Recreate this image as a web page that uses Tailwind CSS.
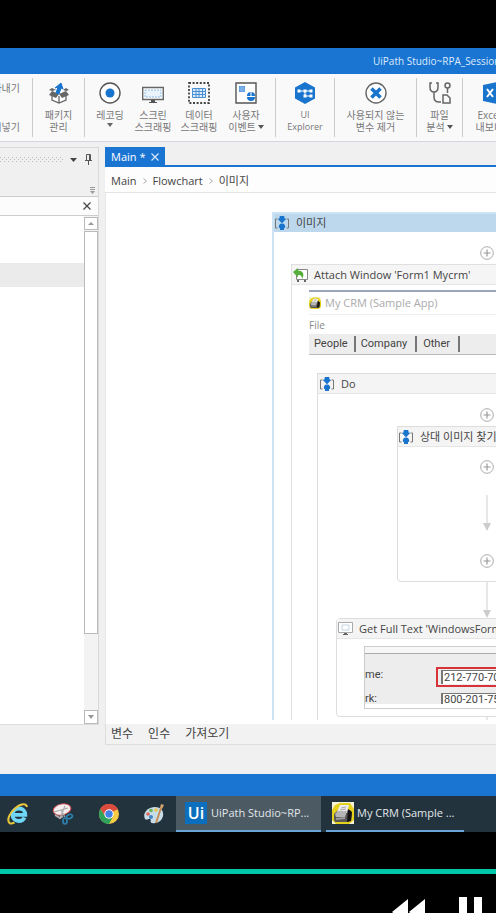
<!DOCTYPE html>
<html lang="ko">
<head>
<meta charset="utf-8">
<title>UiPath Studio</title>
<script src="https://cdn.jsdelivr.net/npm/@tailwindcss/browser@4"></script>
</head>
<body class="flex h-screen flex-col overflow-hidden bg-black font-['Open_Sans','Noto_Sans_CJK_KR',sans-serif] text-[11px] leading-4 text-[#444]">
<svg class="hidden" aria-hidden="true">
  <symbol id="seq" viewBox="0 0 16 16"><path d="M3.500 4H1.500v9h2M12.500 4h2v9h-2" fill="none" stroke="#777"/><path d="M6 1.500h4V4h1.500L8 7.800 4.500 4H6z" fill="#1874cd" stroke="#1874cd" stroke-linejoin="round"/><path d="M8 8.500a3 3 0 0 1 2.800 4.500H10v2H6v-2h-.8A3 3 0 0 1 8 8.500z" fill="#1874cd"/></symbol>
  <symbol id="plus" viewBox="0 0 14 14"><circle cx="7" cy="7" r="6.300" fill="#fff" stroke="#aaa"/><path d="M7 3.500v7M3.500 7h7" stroke="#999" stroke-width="1.200"/></symbol>
  <symbol id="crm" viewBox="0 0 22 22"><path d="M0 0h22v22H0z" fill="#f6f3d8"/><path d="M3 3 8 1h10l4 6v11l-5 4H4l-4-4V8z" fill="#e5d21d"/><path d="m2 12 4-4h12l2 3-1 8-4 1H3l-1-2z" fill="#5a5856"/><path d="M5 10 8 3h9l-2 8z" fill="#ececec"/><path d="m3 12 3-3h9l-2 6H4z" fill="#b5b5b5"/><path d="m4 17 9-1" stroke="#999" stroke-width="2"/><path d="m16 7 4 3-1 9-4 1z" fill="#151313"/><path d="m9 6 5-1M8 8l6-1" stroke="#aaa"/></symbol>
</svg>

<div class="h-12 shrink-0"></div>
<header class="flex h-[26px] shrink-0 items-center overflow-hidden bg-[#1a74d2] pl-[373px]">
  <h1 class="whitespace-nowrap text-[10px] text-[#dcebfa]">UiPath Studio~RPA_Session</h1>
</header>

<nav aria-label="리본" class="flex h-[68px] shrink-0 overflow-hidden whitespace-nowrap border-b border-[#d3d7e2] bg-[#f9f9fa] text-[10px] leading-3 text-[#777]">
  <div class="flex w-8 shrink-0 flex-col items-end justify-between py-2 pr-3">
    <button>잘라내기</button>
    <button class="mr-5 size-2 rounded-full bg-[#4c93da]" aria-label="복사"></button>
    <button>붙여넣기</button>
  </div>
  <span class="my-1 w-px shrink-0 bg-[#ccc]"></span>
  <button class="flex w-[51px] shrink-0 flex-col items-center gap-[5px] pt-2">
    <svg class="size-[22px]" viewBox="0 0 22 22"><path d="M4 12v6l7 3 7-3v-6M11 14v7" fill="#fff" stroke="#666" stroke-width="1.300"/><path d="m4 9 7 3-3 4-7-3zM18 9l-7 3 3 4 7-3z" fill="#666"/><path d="m4 9-3-1 3-2 4 2zM18 9l3-1-3-2-3 2z" fill="#666"/><path d="m8 11 2-6-3 1 6-5 2 6-2-1-2 6z" fill="#1874cd" stroke="#1874cd"/></svg>
    <span>패키지<br>관리</span>
  </button>
  <span class="my-1 w-px shrink-0 bg-[#ccc]"></span>
  <div class="flex shrink-0 pl-1 pr-[6px]">
    <button class="flex w-[42px] flex-col items-center gap-[5px] pt-2">
      <svg class="size-[22px]" viewBox="0 0 22 22"><circle cx="11" cy="11" r="10" fill="#fff" stroke="#555" stroke-width="1.400"/><circle cx="11" cy="11" r="4.500" fill="#1874cd"/></svg>
      <span class="flex flex-col items-center">레코딩<svg class="mt-0.5 h-1 w-1.5" viewBox="0 0 6 4"><path d="M0 0h6L3 4z" fill="#666"/></svg></span>
    </button>
    <button class="flex w-[44px] flex-col items-center gap-[5px] pt-2">
      <svg class="size-[22px]" viewBox="0 0 22 22"><path d="M.7 5.500h20.600v12H.7z" fill="#fff" stroke="#666" stroke-width="1.400"/><path d="M3 8h16v7H3z" fill="#eaf4ff" stroke="#8dbbe6" stroke-dasharray="2 1"/><path d="M9 18h4v2h2v1H7v-1h2z" fill="#555"/></svg>
      <span>스크린<br>스크래핑</span>
    </button>
    <button class="flex w-[48px] flex-col items-center gap-[5px] pt-2">
      <svg class="size-[22px]" viewBox="0 0 22 22"><path d="M1 1h20v20H1z" fill="none" stroke="#444" stroke-width="1.800" stroke-dasharray="2 1.600"/><path d="M4.500 6.500h13v9h-13z" fill="#d9eafb"/><path d="M4.500 6.500h13v9h-13zM4.500 9.500h13M4.500 12.500h13M8 6.500v9M11 6.500v9M14.500 6.500v9" fill="none" stroke="#4b8fd3"/></svg>
      <span>데이터<br>스크래핑</span>
    </button>
    <button class="flex w-[46px] flex-col items-center gap-[5px] pt-2">
      <svg class="size-[22px]" viewBox="0 0 22 22"><path d="M1 1h20v20H1z" fill="#fff" stroke="#555" stroke-width="1.400"/><path d="M4 4h6v6H4z" fill="#4b94dc"/><path d="M6 4v6M8 4v6M4 6h6M4 8h6" stroke="#b8d7f5" stroke-width=".5"/><rect x="12" y="10" width="8" height="9" rx="4" fill="#1874cd"/><path d="M16 10v4M12 14.500h8" stroke="#fff"/></svg>
      <span>사용자<br>이벤트<svg class="mb-0.5 ml-0.5 inline h-1 w-1.5" viewBox="0 0 6 4"><path d="M0 0h6L3 4z" fill="#555"/></svg></span>
    </button>
  </div>
  <span class="my-1 w-px shrink-0 bg-[#ccc]"></span>
  <button class="flex w-[58px] shrink-0 flex-col items-center gap-[5px] pt-2">
    <svg class="size-[22px]" viewBox="0 0 22 22"><path d="m11 0 10 5.500v11L11 22 1 16.500v-11z" fill="#1874cd"/><path d="M5 9h12M11 9v5h6" fill="none" stroke="#fff"/><path d="M3.500 7.500h3v3h-3zM9.500 7.500h3v3h-3zM15.500 7.500h3v3h-3zM9.500 12.500h3v3h-3zM15.500 12.500h3v3h-3z" fill="#fff"/></svg>
    <span class="text-[9px]">UI<br>Explorer</span>
  </button>
  <span class="my-1 w-px shrink-0 bg-[#ccc]"></span>
  <button class="flex w-[81px] shrink-0 flex-col items-center gap-[5px] pt-2">
    <svg class="size-[22px]" viewBox="0 0 22 22"><circle cx="11" cy="11" r="10" fill="#fff" stroke="#666" stroke-width="1.400"/><path d="m6.500 6.500 9 9M15.500 6.500l-9 9" stroke="#1874cd" stroke-width="3.600"/></svg>
    <span>사용되지 않는<br>변수 제거</span>
  </button>
  <span class="my-1 w-px shrink-0 bg-[#ccc]"></span>
  <button class="flex w-[45px] shrink-0 flex-col items-center gap-[5px] pt-2">
    <svg class="size-[22px]" viewBox="0 0 22 22" fill="none" stroke="#666" stroke-width="1.500"><path d="M3 1H1v4c0 4 2 5 4 5s4-1 4-5V1H7M5 10v5c0 3 2 5 5 5h2"/><circle cx="18.500" cy="3.500" r="2.500"/><path d="M18.500 6v5M14 13h4l3 3v5h-7z"/></svg>
    <span>파일<br>분석<svg class="mb-0.5 ml-0.5 inline h-1 w-1.5" viewBox="0 0 6 4"><path d="M0 0h6L3 4z" fill="#555"/></svg></span>
  </button>
  <span class="my-1 w-px shrink-0 bg-[#ccc]"></span>
  <button class="flex w-[62px] shrink-0 flex-col items-center gap-[5px] pt-2">
    <svg class="size-[22px]" viewBox="0 0 22 22"><path d="m0 3 14-3v22L0 19z" fill="#1874cd"/><path d="M14 3h8v16h-8" fill="#fff" stroke="#1874cd"/><path d="m4 7 6 8M10 7l-6 8" stroke="#fff" stroke-width="2"/></svg>
    <span>Excel로<br>내보내기</span>
  </button>
</nav>

<main class="flex min-h-0 flex-1 bg-[#f0f0f0] pb-[29px] pt-[5px]">
  <aside class="mb-5 flex w-[99px] shrink-0 flex-col border-r border-t border-[#d8d8d8]">
    <div class="flex h-[23px] items-center pr-1.5">
      <svg class="h-1.5 min-w-0 flex-1" preserveAspectRatio="none"><defs><pattern id="grip" width="4" height="4" patternUnits="userSpaceOnUse"><path d="M0 0h1v1H0zM2 2h1v1H2z" fill="#bbb"/></pattern></defs><rect width="63" height="6" fill="url(#grip)"/></svg>
      <button aria-label="창 메뉴" class="mr-2"><svg class="h-1 w-[7px]" viewBox="0 0 7 4"><path d="M0 0h7L3.500 4z" fill="#444"/></svg></button>
      <button aria-label="고정"><svg class="h-[11px] w-[7px]" viewBox="0 0 7 11"><path d="M1.500 6.500v-6h4v6M0 6.500h7M3.500 7v4M4.500 1v5" fill="none" stroke="#555"/></svg></button>
    </div>
    <div class="flex h-[25px] items-end justify-end pb-0.5 pr-[3px]">
      <button aria-label="더 보기"><svg class="h-[7px] w-[5px]" viewBox="0 0 5 7"><path d="M0 .5h5M0 2.500h5" stroke="#999"/><path d="M0 4h5L2.500 7z" fill="#999"/></svg></button>
    </div>
    <div class="flex h-5 shrink-0 items-center justify-end border-y border-[#ccc] bg-[#fcfcfc] pr-[7px]">
      <button aria-label="지우기"><svg class="size-2" viewBox="0 0 8 8"><path d="m.5.5 7 7m0-7-7 7" stroke="#444" stroke-width="1.200"/></svg></button>
    </div>
    <div class="flex min-h-0 flex-1 border-b border-[#ddd] bg-white">
      <div class="flex-1 pt-[47px]"><div class="h-6 bg-[#ebebeb]"></div></div>
      <div class="flex w-[14px] flex-col bg-[#f3f3f3]">
        <button aria-label="위로" class="mb-px mt-px flex h-[13px] items-center justify-center border border-[#bbb] bg-white"><svg class="h-[3px] w-1.5" viewBox="0 0 6 3"><path d="M0 3h6L3 0z" fill="#999"/></svg></button>
        <div class="h-[403px] border border-[#bbb] bg-white"></div>
        <button aria-label="아래로" class="mt-auto flex h-[14px] items-center justify-center border border-[#bbb] bg-white"><svg class="h-1 w-1.5" viewBox="0 0 6 4"><path d="M0 0h6L3 4z" fill="#999"/></svg></button>
      </div>
    </div>
  </aside>

  <section class="ml-[6px] flex min-w-0 flex-1 flex-col">
    <div class="flex h-5 shrink-0 border-b-2 border-[#1a74d2]">
      <button class="flex w-[60px] items-center gap-[6px] bg-[#1a74d2] pl-[6px] pt-0.5 text-white">Main *<svg class="size-2" viewBox="0 0 8 8"><path d="m.5.5 7 7m0-7-7 7" stroke="#d6e8fa" stroke-width="1.200"/></svg></button>
    </div>
    <nav aria-label="경로" class="flex h-[26px] shrink-0 items-center gap-[6px] border-b border-[#e4e4e4] bg-[#fdfdfd] pl-[6px] pt-0.5">
      <a href="#">Main</a>
      <svg class="h-1.5 w-1" viewBox="0 0 4 6"><path d="m.5.500 3 2.500-3 2.500" fill="none" stroke="#aaa"/></svg>
      <a href="#">Flowchart</a>
      <svg class="h-1.5 w-1" viewBox="0 0 4 6"><path d="m.5.500 3 2.500-3 2.500" fill="none" stroke="#aaa"/></svg>
      <a href="#">이미지</a>
    </nav>
    <div class="min-h-0 flex-1 overflow-hidden border-l border-[#e8e8e8] bg-white pb-1">
      <div class="h-full overflow-hidden pl-[166px] pt-[19px]">
        <div class="flex w-[430px] flex-col items-center border-2 border-[#cbe3f2]">
          <h2 class="flex h-[18px] w-full items-center gap-[6px] bg-[#bdd8ec]"><svg class="size-4"><use href="#seq"/></svg>이미지</h2>
          <button aria-label="추가" class="mb-1 mt-[14px]"><svg class="size-[14px]"><use href="#plus"/></svg></button>

          <div class="flex w-[392px] flex-col items-center border border-[#e0e0e0]">
            <h3 class="flex h-5 w-full items-center gap-[6px] border-b border-[#e5e5e5] bg-[#f5f5f5] pl-px"><svg class="size-[15px]" viewBox="0 0 15 15"><path d="M3.500 2.500h11v10h-11z" fill="#fff" stroke="#888"/><path d="M5 13v2M12 13v2" stroke="#666" stroke-width="2"/><path d="m0 5 5-4v2.500c5 0 7 4 4 8.500 0-3-1-4-4-4v2.500z" fill="#55ad3c"/></svg>Attach Window 'Form1 Mycrm'</h3>
            <div class="mt-[5px] w-full pl-[17px] pr-4">
              <div class="border-t-2 border-[#9aa5bc]">
                <p class="flex h-[22px] items-center gap-[4px] text-[#aaa]"><svg class="size-3"><use href="#crm"/></svg>My CRM (Sample App)</p>
                <p class="flex h-[20px] items-center border-t border-[#eee] text-[10px] text-[#888]">File</p>
                <div class="flex h-[21px] items-center border-b border-[#bbb] bg-[#ededed] pl-[5px] font-[Roboto,sans-serif] text-[11px] text-[#444]">
                  <button class="border-r-2 border-[#777] pr-[6px]">People</button><button class="border-r-2 border-[#777] pl-[5px] pr-2">Company</button><button class="border-r-2 border-[#777] pl-[6px] pr-2">Other</button>
                </div>
              </div>
            </div>

            <div class="mt-[18px] flex w-[340px] flex-col items-center border border-[#ddd]">
              <h4 class="flex h-5 w-full items-center gap-[6px] border-b border-[#e5e5e5] bg-[#f4f4f4] pl-px"><svg class="size-4"><use href="#seq"/></svg>Do</h4>
              <button aria-label="추가" class="mb-1 mt-[14px]"><svg class="size-[14px]"><use href="#plus"/></svg></button>
              <div class="flex w-[180px] flex-col items-center rounded-b border border-[#ddd]">
                <h5 class="flex h-5 w-full items-center gap-[6px] border-b border-[#e5e5e5] bg-[#f4f4f4]"><svg class="size-4"><use href="#seq"/></svg>상대 이미지 찾기</h5>
                <button aria-label="추가" class="mt-[13px]"><svg class="size-[14px]"><use href="#plus"/></svg></button>
                <svg class="mt-[21px] h-9 w-2" viewBox="0 0 8 36"><path d="M4 0v28" stroke="#d0d0d0"/><path d="M0 28h8l-4 8z" fill="#ccc"/></svg>
                <button aria-label="추가" class="mb-[13px] mt-[23px]"><svg class="size-[14px]"><use href="#plus"/></svg></button>
              </div>
              <svg class="h-9 w-2 shrink-0" viewBox="0 0 8 36"><path d="M4 0v28" stroke="#d0d0d0"/><path d="M0 28h8l-4 8z" fill="#ccc"/></svg>
              <div class="w-[302px] rounded-sm border border-[#ddd]">
                <h5 class="flex h-5 w-full items-center gap-[6px] border-b border-[#e5e5e5] bg-[#f4f4f4] pl-px"><svg class="size-[15px]" viewBox="0 0 15 15"><path d="M.5 1.500h14v10H.5z" fill="#fff" stroke="#aaa"/><path d="M4 4h7v5H4z" fill="none" stroke="#c2d3e2"/><path d="M6 12h3v1h1v1H5v-1h1z" fill="#666"/></svg>Get Full Text 'WindowsForms'</h5>
                <div class="mx-[27px] my-[7px] border border-[#ccc] pb-1 font-[Roboto,sans-serif] text-[11px]">
                  <div class="h-[57px] overflow-hidden bg-[#ededed]">
                    <div class="h-[7px] border-b border-[#aaa] bg-[#f7f7f7]"></div>
                    <div class="mt-[13px] flex h-5 items-start"><span class="w-[71px]">me:</span><span class="flex h-5 flex-1 items-center border-2 border-[#d73338] pl-[3px]"><span class="flex h-[14px] flex-1 items-center border-l-2 border-t border-[#777] bg-white pl-px">212-770-7000</span></span></div>
                    <div class="mt-[6px] flex h-4 items-start"><span class="w-[76px] leading-[12px]">rk:</span><span class="flex-1 border-l-2 border-t border-[#777] bg-white pl-px leading-[12px]">800-201-7500</span></div>
                  </div>
                </div>
              </div>
              <svg class="h-9 w-2 shrink-0" viewBox="0 0 8 36"><path d="M4 0v28" stroke="#d0d0d0"/><path d="M0 28h8l-4 8z" fill="#ccc"/></svg>
            </div>
          </div>
        </div>
      </div>
    </div>
    <div class="flex h-[21px] shrink-0 items-center gap-[15px] border-b border-l border-[#ddd] bg-[#f2f2f2] pl-[5px] text-[12px]">
      <button>변수</button><button>인수</button><button>가져오기</button>
    </div>
  </section>
</main>

<div class="h-[22px] shrink-0 bg-[#1a74d2]"></div>
<nav aria-label="작업 표시줄" class="flex h-9 shrink-0 overflow-hidden whitespace-nowrap bg-[#22333e] text-[#e2e7ea]">
  <button aria-label="Internet Explorer" class="flex w-10 items-center justify-center pr-[5px]"><svg class="size-[22px]" viewBox="0 0 22 22"><path d="M17.500 14.500c-1 2.500-3 3.500-5.500 3.500-4 0-6.500-3-6.500-6.300S8 5.500 12 5.500s6.300 2.500 6.300 6.300H7" fill="none" stroke="#6fd6f6" stroke-width="3.800"/><path d="M2.500 20c-3-3 0-10 6-15s11-4.500 11.500-1M2.500 20c1 1 3 .500 5-.500" fill="none" stroke="#e8c63b" stroke-width="2"/></svg></button>
  <button aria-label="캡처 도구" class="flex w-[46px] items-center justify-center"><svg class="size-[22px]" viewBox="0 0 22 22"><ellipse cx="10" cy="6.500" rx="9" ry="5.500" fill="#f5eeee" stroke="#c8454b" transform="rotate(-12 10 6.500)"/><path d="m9 7 4 7M13 3 8 15M2 9l14-4" stroke="#aaa" stroke-width="1.200"/><path d="m3 12 5 3 3-2" fill="none" stroke="#b8a9ab" stroke-width="2"/><ellipse cx="17.500" cy="13.500" rx="3" ry="2" fill="none" stroke="#2e7fae" stroke-width="1.700" transform="rotate(-20 17.500 13.500)"/><ellipse cx="13" cy="18" rx="2" ry="3" fill="none" stroke="#2e7fae" stroke-width="1.700"/></svg></button>
  <button aria-label="Chrome" class="flex w-[45px] items-center justify-center"><svg class="size-5" viewBox="0 0 20 20"><circle cx="10" cy="10" r="10" fill="#f7ca45"/><path d="M10 10 1.340 5A10 10 0 0 1 18.660 5z" fill="#db4c3f"/><path d="M10 5.500h8.900A10 10 0 0 0 1.340 5L6 12z" fill="#db4c3f"/><path d="M1.340 5A10 10 0 0 0 10 20l4-7.500-4 2-4-2.500z" fill="#2fa35b"/><circle cx="10" cy="10" r="4.700" fill="#fff"/><circle cx="10" cy="10" r="3.700" fill="#4382e8"/></svg></button>
  <button aria-label="그림판" class="flex w-[45px] items-center justify-center"><svg class="size-[22px]" viewBox="0 0 22 22"><path d="M2 16c-3-6 3-12 10-12 6 0 9 4 8 9s-6 8-11 7c-3-1 0-3-2-4-1-1-3 2-5 0z" fill="#c7dce9"/><circle cx="5" cy="11" r="1.800" fill="#db6658"/><circle cx="8" cy="7.500" r="1.800" fill="#68b35b"/><circle cx="13" cy="7" r="1.800" fill="#e9c548"/><circle cx="8" cy="14" r="2" fill="#4087c1"/><path d="m13 20 5-15" stroke="#c58a4c" stroke-width="1.800"/><path d="m17 5 1-4 3 1-2 4z" fill="#d5a56c"/></svg></button>
  <button class="flex w-[145px] items-center gap-1 border-b-2 border-[#69a5d9] bg-[#4c5a63] pl-[9px]"><span class="flex size-[22px] items-center justify-center bg-[#0b6fbd] text-[16px] font-semibold text-white">Ui</span>UiPath Studio~RP...</button>
  <button class="ml-[5px] flex w-[138px] items-center gap-[3px] border-b-2 border-[#69a5d9] pl-[6px]"><svg class="size-[22px]"><use href="#crm"/></svg>My CRM (Sample ...</button>
</nav>

<footer class="shrink-0 pt-[37px]">
  <div role="progressbar" aria-label="재생" class="h-[5px] bg-[#00c8aa]"></div>
  <div class="flex h-[39px] justify-end gap-[33px] overflow-hidden pr-[14px] pt-[23px]">
    <button aria-label="되감기" class="flex h-[28px] items-start pt-[2px]"><svg class="h-[26px] w-[34px]" viewBox="0 0 34 26"><path d="M16 0v26L0 13zM33 0v26L17 13z" fill="#fff"/></svg></button>
    <button aria-label="일시정지" class="flex h-[30px] items-start"><svg class="h-[30px] w-[23px]" viewBox="0 0 23 30"><path d="M0 0h8v30H0zM15 0h8v30h-8z" fill="#fff"/></svg></button>
  </div>
</footer>
</body>
</html>
